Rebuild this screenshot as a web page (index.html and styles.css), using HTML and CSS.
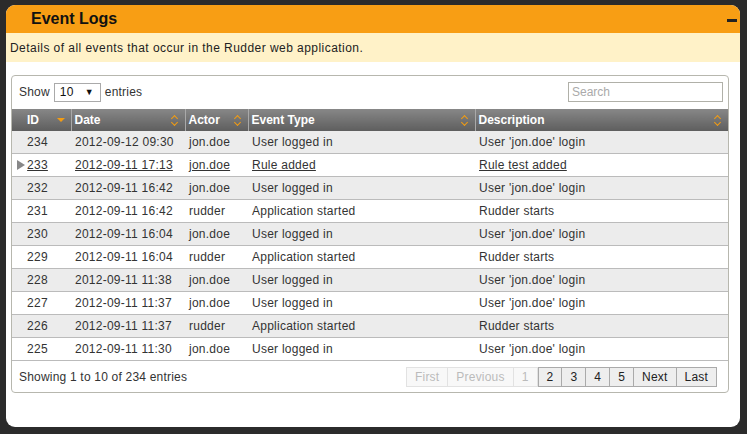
FILE: index.html
```html
<!DOCTYPE html>
<html>
<head>
<meta charset="utf-8">
<link rel="stylesheet" href="styles.css">
</head>
<body>
<div class="panel">
  <div class="panel-head">
    <span class="title">Event Logs</span>
    <span class="minus"></span>
  </div>
  <div class="panel-desc">Details of all events that occur in the Rudder web application.</div>
  <div class="panel-body">
    <div class="grid-box">
      <div class="toolbar">
        <div class="length">Show <span class="select"><span>10</span><span class="caret">▼</span></span> entries</div>
        <div class="search">Search</div>
      </div>
      <table class="grid">
        <colgroup>
          <col class="c-id"><col class="c-date"><col class="c-actor"><col class="c-type"><col class="c-desc">
        </colgroup>
        <thead>
          <tr>
            <th class="h-id"><span>ID</span><span class="sort-desc"></span></th>
            <th><span>Date</span><span class="sort-both"></span></th>
            <th><span>Actor</span><span class="sort-both"></span></th>
            <th><span>Event Type</span><span class="sort-both"></span></th>
            <th><span>Description</span><span class="sort-both"></span></th>
          </tr>
        </thead>
        <tbody>
          <tr class="odd"><td class="id">234</td><td>2012-09-12 09:30</td><td>jon.doe</td><td>User logged in</td><td>User 'jon.doe' login</td></tr>
          <tr class="even hover"><td class="id"><span class="expander"></span>233</td><td>2012-09-11 17:13</td><td>jon.doe</td><td>Rule added</td><td>Rule test added</td></tr>
          <tr class="odd"><td class="id">232</td><td>2012-09-11 16:42</td><td>jon.doe</td><td>User logged in</td><td>User 'jon.doe' login</td></tr>
          <tr class="even"><td class="id">231</td><td>2012-09-11 16:42</td><td>rudder</td><td>Application started</td><td>Rudder starts</td></tr>
          <tr class="odd"><td class="id">230</td><td>2012-09-11 16:04</td><td>jon.doe</td><td>User logged in</td><td>User 'jon.doe' login</td></tr>
          <tr class="even"><td class="id">229</td><td>2012-09-11 16:04</td><td>rudder</td><td>Application started</td><td>Rudder starts</td></tr>
          <tr class="odd"><td class="id">228</td><td>2012-09-11 11:38</td><td>jon.doe</td><td>User logged in</td><td>User 'jon.doe' login</td></tr>
          <tr class="even"><td class="id">227</td><td>2012-09-11 11:37</td><td>jon.doe</td><td>User logged in</td><td>User 'jon.doe' login</td></tr>
          <tr class="odd"><td class="id">226</td><td>2012-09-11 11:37</td><td>rudder</td><td>Application started</td><td>Rudder starts</td></tr>
          <tr class="even last"><td class="id">225</td><td>2012-09-11 11:30</td><td>jon.doe</td><td>User logged in</td><td>User 'jon.doe' login</td></tr>
        </tbody>
      </table>
      <div class="footer">
        <div class="info">Showing 1 to 10 of 234 entries</div>
        <div class="pager">
          <span class="pg off">First</span><span class="pg off">Previous</span><span class="pg off">1</span><span class="pg">2</span><span class="pg">3</span><span class="pg">4</span><span class="pg">5</span><span class="pg">Next</span><span class="pg">Last</span>
        </div>
      </div>
    </div>
  </div>
</div>
</body>
</html>
```

FILE: styles.css
```css
html, body {
  margin: 0;
  padding: 0;
}
body {
  background: #2b2b2b;
  font-family: "Liberation Sans", Arial, sans-serif;
  font-size: 12px;
  color: #333;
  width: 747px;
  height: 434px;
  overflow: hidden;
  padding: 5px 7px 7px 6px;
  box-sizing: border-box;
}
.panel {
  width: 734px;
  height: 422px;
  background: #fff;
  border-radius: 9px;
  overflow: hidden;
  display: flex;
  flex-direction: column;
}
.panel-head {
  height: 28px;
  background: #f89e14;
  display: flex;
  align-items: center;
  justify-content: space-between;
  padding: 0 3px 0 25px;
}
.title {
  font-weight: bold;
  font-size: 16px;
  color: #111;
}
.minus {
  width: 10px;
  height: 3px;
  background: #222;
  margin-top: 3px;
}
.panel-desc {
  height: 29px;
  background: #fff2c8;
  padding-left: 4px;
  display: flex;
  align-items: center;
  color: #222;
  letter-spacing: 0.45px;
}
.panel-body {
  padding: 13px 11px 0 5px;
}
.grid-box {
  border: 1px solid #b7b7ae;
  border-radius: 4px;
  height: 316px;
}
.toolbar {
  height: 33px;
  display: flex;
  align-items: center;
  justify-content: space-between;
  padding: 0 5px 0 7px;
}
.length {
  display: flex;
  align-items: center;
  gap: 4px;
  letter-spacing: 0.2px;
  margin-top: -1px;
}
.select {
  width: 47px;
  height: 19px;
  border: 1px solid #aaa;
  display: flex;
  align-items: center;
  justify-content: space-between;
  padding: 0 6px 0 5px;
  box-sizing: border-box;
  color: #111;
}
.caret {
  font-size: 9px;
  color: #111;
}
.search {
  width: 155px;
  height: 20px;
  border: 1px solid #b0b0a8;
  box-sizing: border-box;
  color: #aaa;
  padding-left: 3px;
  display: flex;
  align-items: center;
  margin-top: -1px;
}
.grid {
  width: 716px;
  border-collapse: collapse;
  table-layout: fixed;
}
.c-id { width: 59px; }
.c-date { width: 114px; }
.c-actor { width: 63px; }
.c-type { width: 227px; }
.c-desc { width: 253px; }
.grid th {
  height: 22px;
  background: linear-gradient(#878787, #5e5e5e);
  color: #fff;
  font-weight: bold;
  text-align: left;
  padding: 0 5px 0 3px;
  border-left: 1px solid #a9a9a9;
  box-sizing: border-box;
  position: relative;
}
.grid th:first-child { border-left: none; }
.grid th.h-id { padding-left: 15px; }
.sort-desc {
  position: absolute;
  right: 6px;
  top: 9px;
  width: 0;
  height: 0;
  border-left: 4px solid transparent;
  border-right: 4px solid transparent;
  border-top: 4px solid #f39c12;
}
.sort-both {
  position: absolute;
  right: 6px;
  top: 5px;
  width: 8px;
  height: 12px;
}
.sort-both::before, .sort-both::after {
  content: "";
  position: absolute;
  left: 1px;
  width: 4px;
  height: 4px;
  border-color: #f39c12;
  border-style: solid;
  border-width: 0;
}
.sort-both::before {
  top: 2px;
  border-left-width: 1.5px;
  border-top-width: 1.5px;
  transform: rotate(45deg);
}
.sort-both::after {
  top: 6px;
  border-right-width: 1.5px;
  border-bottom-width: 1.5px;
  transform: rotate(45deg);
}
.grid td {
  height: 22px;
  padding: 0 3px 0 4px;
  border-top: 1px solid #bbb;
  white-space: nowrap;
  letter-spacing: 0.25px;
}
.grid tr.last td { border-bottom: 1px solid #bbb; }
.grid tr.odd td { background: #ececec; }
.grid tr.even td { background: #fff; }
.grid tr:first-child td { border-top: none; }
.grid td.id {
  text-align: center;
  padding-right: 12px;
  position: relative;
}
.grid tr.hover td { text-decoration: underline; }
.expander {
  position: absolute;
  left: 5px;
  top: 6px;
  width: 0;
  height: 0;
  border-top: 5px solid transparent;
  border-bottom: 5px solid transparent;
  border-left: 8px solid #888;
}
.footer {
  height: 32px;
  display: flex;
  align-items: center;
  justify-content: space-between;
  padding: 0 11px 0 7px;
}
.info {
  letter-spacing: 0.2px;
}
.pager {
  display: flex;
}
.pg {
  height: 20px;
  box-sizing: border-box;
  border: 1px solid #aaa;
  border-left: none;
  background: #eee;
  color: #222;
  padding: 0 8px;
  display: flex;
  align-items: center;
  letter-spacing: 0.2px;
}
.pg:first-child { border-left: 1px solid #e0e0e0; }
.pg.off {
  background: #f8f8f8;
  color: #bbb;
  border-color: #e2e2e2;
}
.pg.off + .pg:not(.off) { border-left: 1px solid #aaa; }
```
